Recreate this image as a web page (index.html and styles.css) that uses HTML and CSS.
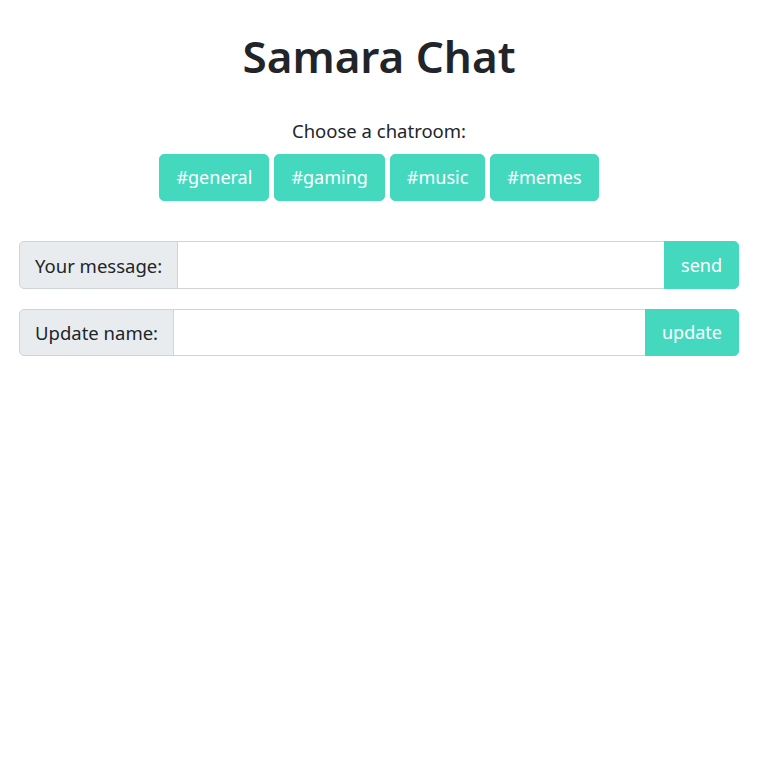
FILE: index.html
```html
<!DOCTYPE html>
<html lang="en">
<head>
<meta charset="utf-8">
<title>Samara Chat</title>
<link rel="stylesheet" href="styles.css">
</head>
<body>
<main class="container">
  <h1 class="title">Samara Chat</h1>
  <p class="choose">Choose a chatroom:</p>
  <div class="rooms">
    <button class="btn btn-lg">#general</button>
    <button class="btn btn-lg">#gaming</button>
    <button class="btn btn-lg">#music</button>
    <button class="btn btn-lg">#memes</button>
  </div>
  <form class="input-group">
    <span class="input-group-text">Your message:</span>
    <input class="form-control" type="text">
    <button class="btn btn-lg btn-end" type="button">send</button>
  </form>
  <form class="input-group">
    <span class="input-group-text">Update name:</span>
    <input class="form-control" type="text">
    <button class="btn btn-lg btn-end" type="button">update</button>
  </form>
</main>
</body>
</html>
```
FILE: styles.css
```css
body {
  margin: 0;
  font-family: "Noto Sans", "Open Sans", sans-serif;
  color: #212529;
  background: #fff;
}
.container {
  width: 720px;
  margin-left: 19px;
  padding-top: 29px;
}
.title {
  margin: 0;
  text-align: center;
  font-size: 44px;
  font-weight: 600;
  line-height: 54px;
}
.choose {
  margin: 36px 0 0;
  text-align: center;
  font-size: 18.5px;
  line-height: 24px;
}
.rooms {
  display: flex;
  justify-content: center;
  gap: 5px;
  margin-top: 11px;
  margin-bottom: 40px;
}
.btn {
  font-family: inherit;
  border: 1px solid #44d9bf;
  background: #44d9bf;
  color: #fff;
  border-radius: 5px;
  cursor: pointer;
}
.btn-lg {
  font-size: 18px;
  line-height: 29px;
  padding: 8px 16px;
  height: 47px;
}
.input-group {
  display: flex;
  margin: 0 0 20px;
  height: 48px;
}
.input-group + .input-group { height: 47px; }
.input-group-text {
  display: flex;
  align-items: center;
  padding: 0 15px;
  font-size: 18.5px;
  background: #e9ecef;
  border: 1px solid #ced4da;
  border-radius: 5px 0 0 5px;
  white-space: nowrap;
}
.form-control {
  flex: 1;
  min-width: 0;
  margin: 0 0 0 -1px;
  border: 1px solid #ced4da;
  padding: 0 16px;
  font-size: 19px;
  font-family: inherit;
  outline: none;
}
.btn-end {
  height: auto;
  margin-left: -1px;
  border-radius: 0 5px 5px 0;
}
```
